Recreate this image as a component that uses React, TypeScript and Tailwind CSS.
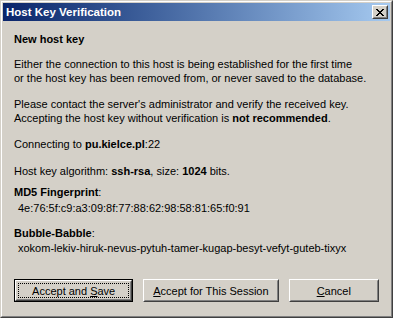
import React from 'react';

const font = { fontFamily: '"Liberation Sans", Arial, sans-serif' };

// Win2k style raised bevel button
const Button: React.FC<{ width: string; isDefault?: boolean; children: React.ReactNode }> = ({
  width,
  isDefault,
  children
}) => {
  if (isDefault) {
    return (
      <div className={`${width} h-[23px] border border-black`}>
        <div className="h-full border border-t-white border-l-white border-b-[#404040] border-r-[#404040]">
          <div className="h-full border border-t-[#d4d0c8] border-l-[#d4d0c8] border-b-[#808080] border-r-[#808080] p-[1px]">
            <div className="h-full border border-dotted border-black flex items-center justify-center">
              {children}
            </div>
          </div>
        </div>
      </div>
    );
  }

  return (
    <div className={`${width} h-[23px]`}>
      <div className="h-full border border-t-white border-l-white border-b-[#404040] border-r-[#404040]">
        <div className="h-full border border-t-[#d4d0c8] border-l-[#d4d0c8] border-b-[#808080] border-r-[#808080] flex items-center justify-center">
          {children}
        </div>
      </div>
    </div>
  );
};

export default function App() {
  return (
    <div className="w-[393px] h-[318px] bg-[#d4d0c8] text-black text-[11px] leading-[14px] whitespace-nowrap" style={font}>
      <div className="h-full border border-t-[#d4d0c8] border-l-[#d4d0c8] border-b-[#404040] border-r-[#404040]">
        <div className="h-full border border-t-white border-l-white border-b-[#808080] border-r-[#808080] p-[1px] flex flex-col">
          {/* Title bar */}
          <div className="h-[18px] flex items-center justify-between pl-[3px] pr-[2px] bg-gradient-to-r from-[#0a246a] to-[#a6caf0]">
            <span className="text-white font-bold text-[11.5px]">Host Key Verification</span>
            <div className="w-[16px] h-[14px] bg-[#d4d0c8] border border-t-white border-l-white border-b-[#404040] border-r-[#404040]">
              <div className="h-full border border-t-[#d4d0c8] border-l-[#d4d0c8] border-b-[#808080] border-r-[#808080] flex items-center justify-center">
                <svg width="8" height="7" viewBox="0 0 8 7" shapeRendering="crispEdges">
                  <path d="M0 0h2v1H0zM6 0h2v1H6zM1 1h2v1H1zM5 1h2v1H5zM2 2h4v1H2zM3 3h2v1H3zM2 4h4v1H2zM1 5h2v1H1zM5 5h2v1H5zM0 6h2v1H0zM6 6h2v1H6z" fill="#000" />
                </svg>
              </div>
            </div>
          </div>

          {/* Content */}
          <div className="flex-1 flex flex-col px-[11px] pt-[11px]">
            <div className="font-bold">New host key</div>

            <div className="mt-[11px]">
              <div>Either the connection to this host is being established for the first time</div>
              <div>or the host key has been removed from, or never saved to the database.</div>
            </div>

            <div className="mt-[12px]">
              <div>Please contact the server's administrator and verify the received key.</div>
              <div>
                Accepting the host key without verification is <b>not recommended</b>.
              </div>
            </div>

            <div className="mt-[12px]">
              Connecting to <b>pu.kielce.pl</b>:22
            </div>

            <div className="mt-[13px]">
              Host key algorithm: <b>ssh-rsa</b>, size: <b>1024</b> bits.
            </div>

            <div className="mt-[7px]">
              <b>MD5 Fingerprint</b>:
            </div>
            <div className="mt-[2px] pl-[4px]">4e:76:5f:c9:a3:09:8f:77:88:62:98:58:81:65:f0:91</div>

            <div className="mt-[11px]">
              <b>Bubble-Babble</b>:
            </div>
            <div className="mt-[1px] pl-[4px]">xokom-lekiv-hiruk-nevus-pytuh-tamer-kugap-besyt-vefyt-guteb-tixyx</div>

            {/* Buttons */}
            <div className="mt-[24px] flex gap-[10px]">
              <Button width="w-[120px]" isDefault>
                <span>
                  Accept and <u>S</u>ave
                </span>
              </Button>
              <Button width="w-[136px]">
                <span>
                  <u>A</u>ccept for This Session
                </span>
              </Button>
              <Button width="w-[91px]">
                <span>
                  <u>C</u>ancel
                </span>
              </Button>
            </div>
          </div>
        </div>
      </div>
    </div>
  );
}
